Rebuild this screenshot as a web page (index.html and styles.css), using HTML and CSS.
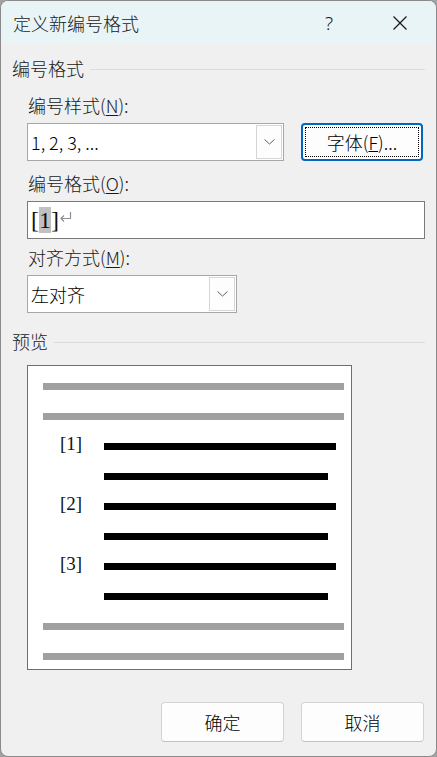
FILE: index.html
```html
<!DOCTYPE html>
<html lang="zh-CN">
<head>
<meta charset="utf-8">
<title>定义新编号格式</title>
<link rel="stylesheet" href="styles.css">
</head>
<body>
  <div class="window">
    <div class="titlebar">
      <span class="title">定义新编号格式</span>
      <span class="help">?</span>
      <span class="close">
        <svg width="16" height="16" viewBox="0 0 16 16"><path d="M1.5 1.5 L14.5 14.5 M14.5 1.5 L1.5 14.5" stroke="#1a1a1a" stroke-width="1.3" fill="none"/></svg>
      </span>
    </div>

    <div class="content">
      <!-- number format group -->
      <div class="group-head"><span class="ui">编号格式</span><i class="rule"></i></div>

      <div class="label ui">编号样式(<u>N</u>):</div>
      <div class="row">
        <div class="combo style-combo">
          <span class="value ui">1, 2, 3, ...</span>
          <span class="drop"><svg width="11" height="6" viewBox="0 0 11 6"><path d="M0.5 0.5 L5.5 5 L10.5 0.5" stroke="#606060" fill="none"/></svg></span>
        </div>
        <button class="btn font-btn"><span class="focus ui">字体(<u>F</u>)...</span></button>
      </div>

      <div class="label label-o ui">编号格式(<u>O</u>):</div>
      <div class="edit">
        <span class="serif">[<span class="sel">1</span>]</span>
        <svg class="ret" width="13" height="12" viewBox="0 0 13 12"><path d="M11.5 1 V7.5 H2 M5 4.5 L2 7.5 L5 10.5" stroke="#8c8f96" stroke-width="1.2" fill="none"/></svg>
      </div>

      <div class="label label-m ui">对齐方式(<u>M</u>):</div>
      <div class="combo align-combo">
        <span class="value ui">左对齐</span>
        <span class="drop"><svg width="11" height="6" viewBox="0 0 11 6"><path d="M0.5 0.5 L5.5 5 L10.5 0.5" stroke="#606060" fill="none"/></svg></span>
      </div>

      <!-- preview group -->
      <div class="group-head preview-head"><span class="ui">预览</span><i class="rule"></i></div>

      <div class="preview">
        <div class="bar gray"></div>
        <div class="bar gray"></div>
        <div class="item"><span class="num">[1]</span><i class="bar black"></i></div>
        <div class="item"><span class="num"></span><i class="bar black short"></i></div>
        <div class="item"><span class="num">[2]</span><i class="bar black"></i></div>
        <div class="item"><span class="num"></span><i class="bar black short"></i></div>
        <div class="item"><span class="num">[3]</span><i class="bar black"></i></div>
        <div class="item"><span class="num"></span><i class="bar black short"></i></div>
        <div class="bar gray"></div>
        <div class="bar gray"></div>
      </div>

      <div class="footer">
        <button class="btn ui">确定</button>
        <button class="btn ui">取消</button>
      </div>
    </div>
  </div>
</body>
</html>
```

FILE: styles.css
```css
html, body
{
  margin: 0;
  padding: 0;
  background: #a2a2a2;
}

body
{
  font-family: "Noto Sans CJK SC", "Noto Sans", sans-serif;
  font-size: 18px;
  color: #000;
}

.ui, .titlebar .title { font-weight: 300; }

.window
{
  box-sizing: border-box;
  width: 437px;
  height: 757px;
  border: 1px solid #8a8a8a;
  border-radius: 8px;
  overflow: hidden;
  background: #f0f0f0;
  display: flex;
  flex-direction: column;
}

/* title bar */

.titlebar
{
  height: 43px;
  background: #e9f4f6;
  display: flex;
  align-items: center;
  padding-left: 12px;
  color: #1a1a1a;
}

.titlebar .title { flex: 1; line-height: 24px; padding-top: 1px; }

.titlebar .help
{
  width: 20px;
  text-align: center;
  margin-right: 53px;
  font-family: "Noto Sans", sans-serif;
  font-size: 19px;
  font-weight: 300;
}

.titlebar .close
{
  display: flex;
  margin-right: 28px;
}

/* body */

.content
{
  flex: 1;
  display: flex;
  flex-direction: column;
  padding: 0 11px 0 11px;
}

.group-head
{
  display: flex;
  align-items: center;
  gap: 6px;
  line-height: 24px;
  margin-top: 12px;
  color: #1a1a1a;
}

.group-head .rule
{
  flex: 1;
  height: 1px;
  background: #dcdcdc;
  margin-top: 2px;
}

.label
{
  line-height: 24px;
  margin: 13px 0 6px 16px;
  color: #1a1a1a;
}

.label u { text-decoration-thickness: 1px; text-underline-offset: 2px; }

.label-o { margin-top: 10px; }
.label-m { margin-top: 6px; }

.row
{
  display: flex;
  margin-left: 15px;
  gap: 17px;
}

.combo
{
  box-sizing: border-box;
  height: 38px;
  background: #fff;
  border: 1px solid #a7a7a7;
  display: flex;
  align-items: center;
  padding: 1px 1px 1px 0;
}

.combo .value { flex: 1; padding-left: 3px; line-height: 24px; }

.combo .drop
{
  box-sizing: border-box;
  width: 26px;
  height: 100%;
  border: 1px solid #d6d6d6;
  background: #fdfdfd;
  display: flex;
  align-items: center;
  justify-content: center;
}

.style-combo { width: 257px; }

.align-combo
{
  width: 210px;
  margin-left: 15px;
}

.btn
{
  box-sizing: border-box;
  height: 40px;
  width: 123px;
  font-family: inherit;
  font-size: 18px;
  color: #000;
  background: #fdfdfd;
  border: 1px solid #d3d3d3;
  border-bottom-color: #c2c2c2;
  border-radius: 4px;
  padding: 0;
}

.font-btn
{
  height: 38px;
  width: 122px;
  border: 2px solid #0067c0;
  padding: 2px;
}

.font-btn .focus
{
  display: flex;
  align-items: center;
  justify-content: center;
  height: 100%;
  border: 1px dotted #000;
  box-sizing: border-box;
}

.edit
{
  box-sizing: border-box;
  height: 38px;
  margin-left: 15px;
  background: #fff;
  border: 1px solid #7a7a7a;
  display: flex;
  align-items: center;
  padding-left: 3px;
}

.serif, .item .num
{
  font-family: "Liberation Serif", "Times New Roman", serif;
  font-weight: normal;
  font-synthesis: none;
  color: #111;
}

.serif
{
  font-size: 24px;
  line-height: 26px;
}

.serif .sel { background: #c0c0c0; }

.edit .ret { margin-left: 0; margin-top: -6px; }

.preview-head { margin-top: 16px; }

/* preview page */

.preview
{
  box-sizing: border-box;
  width: 325px;
  height: 305px;
  margin: 12px 0 0 15px;
  background: #fff;
  border: 1px solid #6e6e6e;
  display: flex;
  flex-direction: column;
  gap: 23px;
  padding: 17px 7px 0 15px;
}

.bar
{
  display: block;
  height: 7px;
  flex-shrink: 0;
}

.bar.gray { background: #a0a0a0; }

.item
{
  display: flex;
  align-items: center;
  height: 7px;
}

.item .num
{
  width: 61px;
  padding-left: 17px;
  box-sizing: border-box;
  font-size: 19px;
  line-height: 7px;
  margin-top: -7px;
}

.bar.black
{
  width: 232px;
  background: #000;
}

.bar.black.short { width: 224px; }

.footer
{
  display: flex;
  justify-content: flex-end;
  gap: 17px;
  margin-top: 32px;
  padding-right: 1px;
}
```
